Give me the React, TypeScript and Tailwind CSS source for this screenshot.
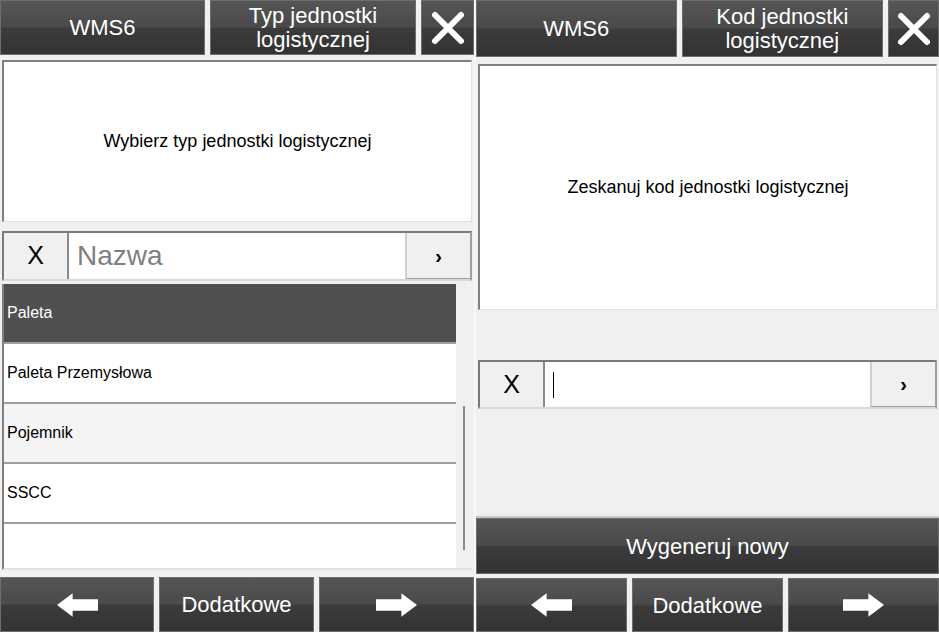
import React from "react";

const FONT = { fontFamily: '"Liberation Sans", Arial, sans-serif' };

const dark =
  "bg-[linear-gradient(180deg,#555555_0%,#4a4a4a_48%,#3b3b3b_52%,#333333_100%)] border border-[#6e6e6e] text-white flex items-center justify-center text-center";

function CloseIcon() {
  return (
    <svg width="36" height="36" viewBox="0 0 36 36">
      <path d="M5 5 L31 31 M31 5 L5 31" stroke="white" strokeWidth="6" strokeLinecap="round" />
    </svg>
  );
}

function ArrowLeft() {
  return (
    <svg width="41" height="24" viewBox="0 0 42 24">
      <polygon points="0,12 16,0 16,6 42,6 42,18 16,18 16,24" fill="white" />
    </svg>
  );
}

function ArrowRight() {
  return (
    <svg width="41" height="24" viewBox="0 0 42 24">
      <polygon points="42,12 26,0 26,6 0,6 0,18 26,18 26,24" fill="white" />
    </svg>
  );
}

function Header({ title, widths, h }: { title: string; widths: [string, string, string]; h: string }) {
  return (
    <div className={`flex gap-[5px] ${h} shrink-0`}>
      <div className={`${dark} ${widths[0]} text-[22px]`}>WMS6</div>
      <div className={`${dark} ${widths[1]} text-[22px] leading-[24px] px-6`}>{title}</div>
      <div className={`${dark} ${widths[2]}`}>
        <CloseIcon />
      </div>
    </div>
  );
}

function BottomBar({ widths, h }: { widths: [string, string, string]; h: string }) {
  return (
    <div className={`flex gap-[5px] ${h} shrink-0`}>
      <div className={`${dark} ${widths[0]}`}>
        <ArrowLeft />
      </div>
      <div className={`${dark} ${widths[1]} text-[22px]`}>Dodatkowe</div>
      <div className={`${dark} ${widths[2]}`}>
        <ArrowRight />
      </div>
    </div>
  );
}

function SearchRow({ placeholder, h }: { placeholder?: string; h: string }) {
  return (
    <div className={`flex ${h} border-2 border-[#7a7a7a] border-r-[#a0a0a0] border-b-[#d8d8d8] bg-white shrink-0`}>
      <div className="w-[65px] bg-[#f0f0f0] border-r-2 border-[#8a8a8a] flex items-center justify-center text-[25px] text-black">X</div>
      <div className="flex-1 flex items-center pl-2">
        {placeholder ? (
          <span className="text-[28px] text-[#7f7f7f]">{placeholder}</span>
        ) : (
          <span className="w-px h-[26px] bg-black" />
        )}
      </div>
      <div className="w-[65px] bg-[#f0f0f0] border-l-2 border-[#d0d0d0] border-b border-b-[#a0a0a0] flex items-center justify-center text-[20px] font-bold text-black">›</div>
    </div>
  );
}

const items = [
  { name: "Paleta", cls: "bg-[#505050] text-white" },
  { name: "Paleta Przemysłowa", cls: "bg-white text-black" },
  { name: "Pojemnik", cls: "bg-[#f4f4f4] text-black" },
  { name: "SSCC", cls: "bg-white text-black" },
];

function LeftPanel() {
  return (
    <div className="w-[474px] h-[632px] flex flex-col bg-[#f0f0f0] shrink-0">
      <Header title="Typ jednostki logistycznej" widths={["w-[205px]", "w-[206px]", "w-[53px]"]} h="h-[55px]" />
      <div className="mt-[5px] mx-[2px] h-[162px] bg-white border-l-2 border-t-2 border-[#808080] border-r border-b border-r-[#e0e0e0] border-b-[#e0e0e0] flex items-center justify-center text-[18px] text-black">
        Wybierz typ jednostki logistycznej
      </div>
      <div className="mt-[9px] mx-[2px]">
        <SearchRow placeholder="Nazwa" h="h-[50px]" />
      </div>
      <div className="mt-[3px] mx-[2px] h-[286px] flex border-l-2 border-[#808080] border-b-2 border-b-[#e0e0e0]">
        <div className="flex-1 flex flex-col bg-white">
          {items.map((it) => (
            <div key={it.name} className={`h-[60px] flex items-center pl-[3px] text-[16px] border-b-2 border-[#a0a0a0] ${it.cls}`}>
              {it.name}
            </div>
          ))}
          <div className="flex-1 bg-white" />
        </div>
        <div className="w-[16px] bg-[#f0f0f0] flex justify-center pt-[122px]">
          <div className="w-[2px] h-[144px] bg-[#8a8a8a]" />
        </div>
      </div>
      <div className="flex-1" />
      <BottomBar widths={["w-[154px]", "w-[155px]", "w-[155px]"]} h="h-[55px]" />
    </div>
  );
}

function RightPanel() {
  return (
    <div className="w-[463px] h-[632px] flex flex-col bg-[#f0f0f0] shrink-0">
      <Header title="Kod jednostki logistycznej" widths={["w-[201px]", "w-[202px]", "w-[51px]"]} h="h-[57px]" />
      <div className="mt-[7px] mx-[2px] h-[246px] bg-white border-l-2 border-t-2 border-[#808080] border-r border-b border-r-[#e0e0e0] border-b-[#e0e0e0] flex items-center justify-center text-[18px] text-black">
        Zeskanuj kod jednostki logistycznej
      </div>
      <div className="mt-[50px] mx-[2px]">
        <SearchRow h="h-[49px]" />
      </div>
      <div className="flex-1" />
      <div className="h-[2px] bg-[#c8c8c8]" />
      <div className={`${dark} h-[56px] text-[22px] shrink-0`}>Wygeneruj nowy</div>
      <div className="h-[4px]" />
      <BottomBar widths={["w-[151px]", "w-[151px]", "w-[151px]"]} h="h-[54px]" />
    </div>
  );
}

export default function App() {
  return (
    <div className="w-[939px] h-[632px] flex gap-[2px] bg-[#f7f7f7] overflow-hidden" style={FONT}>
      <LeftPanel />
      <RightPanel />
    </div>
  );
}
